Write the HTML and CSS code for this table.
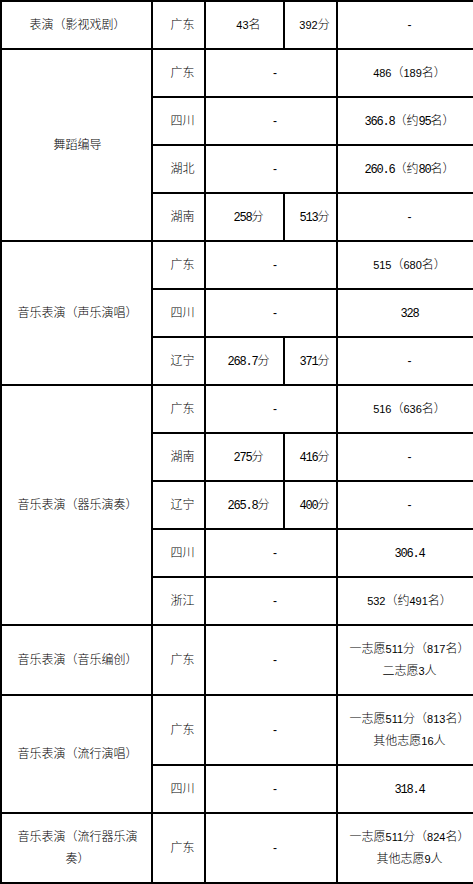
FILE: index.html
```html
<!DOCTYPE html>
<html lang="zh-CN">
<head>
<meta charset="utf-8">
<title>录取分数</title>
<link rel="stylesheet" href="styles.css">
</head>
<body>
<div class="sheet">
  <div class="cell c1"><p class="v">表演（影视戏剧）</p></div>
  <div class="cell"><p class="v">广东</p></div>
  <div class="cell"><p class="v"><span class="n">43</span>名</p></div>
  <div class="cell"><p class="v"><span class="n">392</span>分</p></div>
  <div class="cell"><p class="v">-</p></div>

  <div class="cell c1 r4"><p class="v">舞蹈编导</p></div>
  <div class="cell"><p class="v">广东</p></div>
  <div class="cell w2"><p class="v">-</p></div>
  <div class="cell"><p class="v"><span class="n">486</span>（<span class="n">189</span>名）</p></div>
  <div class="cell"><p class="v">四川</p></div>
  <div class="cell w2"><p class="v">-</p></div>
  <div class="cell"><p class="v"><span class="m">366.8</span>（约<span class="m">95</span>名）</p></div>
  <div class="cell"><p class="v">湖北</p></div>
  <div class="cell w2"><p class="v">-</p></div>
  <div class="cell"><p class="v"><span class="m">260.6</span>（约<span class="m">80</span>名）</p></div>
  <div class="cell"><p class="v">湖南</p></div>
  <div class="cell"><p class="v"><span class="m">258</span>分</p></div>
  <div class="cell"><p class="v"><span class="m">513</span>分</p></div>
  <div class="cell"><p class="v">-</p></div>

  <div class="cell c1 r3"><p class="v">音乐表演（声乐演唱）</p></div>
  <div class="cell"><p class="v">广东</p></div>
  <div class="cell w2"><p class="v">-</p></div>
  <div class="cell"><p class="v"><span class="n">515</span>（<span class="n">680</span>名）</p></div>
  <div class="cell"><p class="v">四川</p></div>
  <div class="cell w2"><p class="v">-</p></div>
  <div class="cell"><p class="v"><span class="m">328</span></p></div>
  <div class="cell"><p class="v">辽宁</p></div>
  <div class="cell"><p class="v"><span class="m">268.7</span>分</p></div>
  <div class="cell"><p class="v"><span class="m">371</span>分</p></div>
  <div class="cell"><p class="v">-</p></div>

  <div class="cell c1 r5"><p class="v">音乐表演（器乐演奏）</p></div>
  <div class="cell"><p class="v">广东</p></div>
  <div class="cell w2"><p class="v">-</p></div>
  <div class="cell"><p class="v"><span class="n">516</span>（<span class="n">636</span>名）</p></div>
  <div class="cell"><p class="v">湖南</p></div>
  <div class="cell"><p class="v"><span class="m">275</span>分</p></div>
  <div class="cell"><p class="v"><span class="m">416</span>分</p></div>
  <div class="cell"><p class="v">-</p></div>
  <div class="cell"><p class="v">辽宁</p></div>
  <div class="cell"><p class="v"><span class="m">265.8</span>分</p></div>
  <div class="cell"><p class="v"><span class="m">400</span>分</p></div>
  <div class="cell"><p class="v">-</p></div>
  <div class="cell"><p class="v">四川</p></div>
  <div class="cell w2"><p class="v">-</p></div>
  <div class="cell"><p class="v"><span class="m">306.4</span></p></div>
  <div class="cell"><p class="v">浙江</p></div>
  <div class="cell w2"><p class="v">-</p></div>
  <div class="cell"><p class="v"><span class="n">532</span>（约<span class="n">491</span>名）</p></div>

  <div class="cell c1"><p class="v">音乐表演（音乐编创）</p></div>
  <div class="cell"><p class="v">广东</p></div>
  <div class="cell w2"><p class="v">-</p></div>
  <div class="cell"><p class="v">一志愿<span class="n">511</span>分（<span class="n">817</span>名）<br>二志愿<span class="n">3</span>人</p></div>

  <div class="cell c1 r2"><p class="v">音乐表演（流行演唱）</p></div>
  <div class="cell"><p class="v">广东</p></div>
  <div class="cell w2"><p class="v">-</p></div>
  <div class="cell"><p class="v">一志愿<span class="n">511</span>分（<span class="n">813</span>名）<br>其他志愿<span class="n">16</span>人</p></div>
  <div class="cell"><p class="v">四川</p></div>
  <div class="cell w2"><p class="v">-</p></div>
  <div class="cell"><p class="v"><span class="m">318.4</span></p></div>

  <div class="cell c1"><p class="v">音乐表演（流行器乐演奏）</p></div>
  <div class="cell"><p class="v">广东</p></div>
  <div class="cell w2"><p class="v">-</p></div>
  <div class="cell"><p class="v">一志愿<span class="n">511</span>分（<span class="n">824</span>名）<br>其他志愿<span class="n">9</span>人</p></div>
</div>
</body>
</html>
```

FILE: styles.css
```css
html, body {
  margin: 0;
  padding: 0;
  background: #fff;
  overflow: hidden;
}

.sheet {
  display: grid;
  grid-template-columns: 149px 51px 77px 51px 135px;
  grid-template-rows: repeat(13, 46px) 68px 68px 46px 68px;
  gap: 2px;
  padding: 2px 0 2px 2px;
  background: #000;
  width: 473px;
  box-sizing: border-box;
  font-family: "Liberation Sans", "Noto Sans CJK SC", sans-serif;
  font-size: 12px;
  font-weight: 300;
  line-height: 22px;
  color: #000;
}

.cell {
  background: #fff;
  display: flex;
  align-items: center;
  justify-content: center;
  padding: 0 0 0 8px;
  min-width: 0;
  min-height: 0;
}

.c1 {
  padding: 0 8px 0 10px;
}

.v {
  margin: 0;
  text-align: center;
}

.r2 { grid-row: span 2; }
.r3 { grid-row: span 3; }
.r4 { grid-row: span 4; }
.r5 { grid-row: span 5; }
.w2 { grid-column: span 2; }

.n {
  font-family: "Liberation Sans", sans-serif;
  font-size: 11px;
  font-weight: 400;
  line-height: 0;
}

.m {
  font-family: "Liberation Mono", monospace;
  font-size: 12px;
  font-weight: 400;
  letter-spacing: -1.2px;
  line-height: 0;
}
```
